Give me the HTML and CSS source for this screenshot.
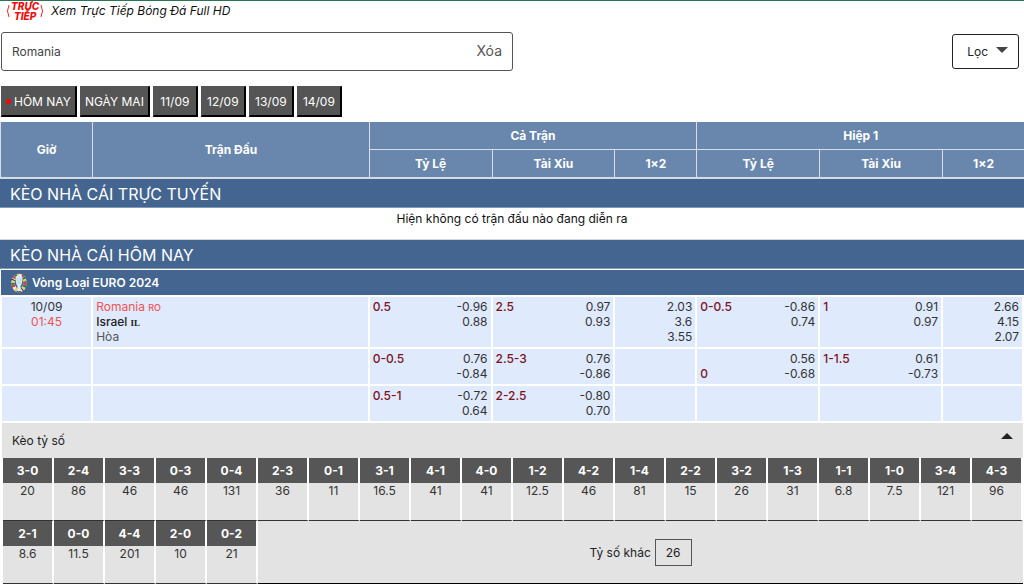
FILE: index.html
```
<!DOCTYPE html>
<html lang="vi">
<head>
<meta charset="utf-8">
<meta name="viewport" content="width=device-width, initial-scale=1">
<title>Kèo nhà cái</title>
<link rel="stylesheet" href="styles.css">
</head>
<body>
<header class="live">
  <a class="live-link" href="#live">
    <span class="live-logo"><svg class="paren" viewBox="0 0 4 16" aria-hidden="true"><path d="M3 2Q0 8 3 14"/></svg><span class="live-word">TRỰC<br>TIẾP</span><svg class="paren" viewBox="0 0 4 16" aria-hidden="true"><path d="M1 2Q4 8 1 14"/></svg></span>
    <span>Xem Trực Tiếp Bóng Đá Full HD</span>
  </a>
</header>
<form class="toolbar">
  <div class="search">
    <input class="search-input" type="text" value="Romania" aria-label="Tìm trận đấu">
    <button class="search-clear" type="reset">Xóa</button>
  </div>
  <button class="filter" type="button">Lọc <span class="arrow arrow-down"></span></button>
</form>
<nav class="days">
  <button class="day" type="button"><span class="dot"></span>HÔM NAY</button>
  <button class="day" type="button">NGÀY MAI</button>
  <button class="day" type="button">11/09</button>
  <button class="day" type="button">12/09</button>
  <button class="day" type="button">13/09</button>
  <button class="day" type="button">14/09</button>
</nav>
<main>
<table class="odds">
  <colgroup><col class="c-time"><col class="c-match"><col class="c-line"><col class="c-line"><col class="c-win"><col class="c-line"><col class="c-line"><col class="c-win"></colgroup>
  <thead>
    <tr><th rowspan="2">Giờ</th><th rowspan="2">Trận Đấu</th><th colspan="3">Cả Trận</th><th colspan="3">Hiệp 1</th></tr>
    <tr><th>Tỷ Lệ</th><th>Tài Xỉu</th><th>1×2</th><th>Tỷ Lệ</th><th>Tài Xỉu</th><th>1×2</th></tr>
  </thead>
  <tbody>
    <tr><th class="band" colspan="8">KÈO NHÀ CÁI TRỰC TUYẾN</th></tr>
    <tr><td class="empty" colspan="8">Hiện không có trận đấu nào đang diễn ra</td></tr>
    <tr><th class="band" colspan="8">KÈO NHÀ CÁI HÔM NAY</th></tr>
    <tr><th class="league" colspan="8"><span class="league-name">
      <svg class="league-icon" viewBox="0 0 16 20" aria-hidden="true">
        <g fill="none" stroke-width="3.500">
          <ellipse cx="8" cy="10" rx="6" ry="7.500" stroke="#eef1f0"/>
          <ellipse cx="8" cy="10" rx="6" ry="7.500" stroke="#d93434" stroke-dasharray="2 6.500"/>
          <ellipse cx="8" cy="10" rx="6" ry="7.500" stroke="#1d7a4a" stroke-dasharray="2 6.500" stroke-dashoffset="-2.200"/>
          <ellipse cx="8" cy="10" rx="6" ry="7.500" stroke="#f0c62d" stroke-dasharray="1.600 6.900" stroke-dashoffset="-4.400"/>
          <ellipse cx="8" cy="10" rx="6" ry="7.500" stroke="#202a3a" stroke-dasharray="1 16" stroke-dashoffset="-6.500"/>
        </g>
        <path d="M4.500 4Q8 0 11.500 4L11 10Q10.500 12 9.500 13L10 18H6L6.500 13Q5.500 12 5 10Z" fill="#dceaf6"/>
        <path d="M6.500 5L7 11M9.500 5L9 11" stroke="#b4d0e6" fill="none"/>
      </svg>Vòng Loại EURO 2024</span></th></tr>
    <tr class="match">
      <td class="time">10/09<br><span class="hot">01:45</span></td>
      <td class="teams"><span class="hot">Romania <small>RO</small></span><br><span class="away">Israel <small class="serif">IL</small></span><br>Hòa</td>
      <td><div class="pair"><span class="line">0.5</span><span>-0.96<br>0.88</span></div></td>
      <td><div class="pair"><span class="line">2.5</span><span>0.97<br>0.93</span></div></td>
      <td class="win">2.03<br>3.6<br>3.55</td>
      <td><div class="pair"><span class="line">0-0.5</span><span>-0.86<br>0.74</span></div></td>
      <td><div class="pair"><span class="line">1</span><span>0.91<br>0.97</span></div></td>
      <td class="win">2.66<br>4.15<br>2.07</td>
    </tr>
    <tr class="match">
      <td></td><td></td>
      <td><div class="pair"><span class="line">0-0.5</span><span>0.76<br>-0.84</span></div></td>
      <td><div class="pair"><span class="line">2.5-3</span><span>0.76<br>-0.86</span></div></td>
      <td></td>
      <td><div class="pair"><span class="line"><br>0</span><span>0.56<br>-0.68</span></div></td>
      <td><div class="pair"><span class="line">1-1.5</span><span>0.61<br>-0.73</span></div></td>
      <td></td>
    </tr>
    <tr class="match">
      <td></td><td></td>
      <td><div class="pair"><span class="line">0.5-1</span><span>-0.72<br>0.64</span></div></td>
      <td><div class="pair"><span class="line">2-2.5</span><span>-0.80<br>0.70</span></div></td>
      <td></td><td></td><td></td><td></td>
    </tr>
  </tbody>
</table>
<section class="scores">
  <button class="scores-head" type="button"><span>Kèo tỷ số</span><span class="arrow arrow-up"></span></button>
  <div class="score-grid">
    <dl class="score"><dt>3-0</dt><dd>20</dd></dl>
    <dl class="score"><dt>2-4</dt><dd>86</dd></dl>
    <dl class="score"><dt>3-3</dt><dd>46</dd></dl>
    <dl class="score"><dt>0-3</dt><dd>46</dd></dl>
    <dl class="score"><dt>0-4</dt><dd>131</dd></dl>
    <dl class="score"><dt>2-3</dt><dd>36</dd></dl>
    <dl class="score"><dt>0-1</dt><dd>11</dd></dl>
    <dl class="score"><dt>3-1</dt><dd>16.5</dd></dl>
    <dl class="score"><dt>4-1</dt><dd>41</dd></dl>
    <dl class="score"><dt>4-0</dt><dd>41</dd></dl>
    <dl class="score"><dt>1-2</dt><dd>12.5</dd></dl>
    <dl class="score"><dt>4-2</dt><dd>46</dd></dl>
    <dl class="score"><dt>1-4</dt><dd>81</dd></dl>
    <dl class="score"><dt>2-2</dt><dd>15</dd></dl>
    <dl class="score"><dt>3-2</dt><dd>26</dd></dl>
    <dl class="score"><dt>1-3</dt><dd>31</dd></dl>
    <dl class="score"><dt>1-1</dt><dd>6.8</dd></dl>
    <dl class="score"><dt>1-0</dt><dd>7.5</dd></dl>
    <dl class="score"><dt>3-4</dt><dd>121</dd></dl>
    <dl class="score"><dt>4-3</dt><dd>96</dd></dl>
    <dl class="score"><dt>2-1</dt><dd>8.6</dd></dl>
    <dl class="score"><dt>0-0</dt><dd>11.5</dd></dl>
    <dl class="score"><dt>4-4</dt><dd>201</dd></dl>
    <dl class="score"><dt>2-0</dt><dd>10</dd></dl>
    <dl class="score"><dt>0-2</dt><dd>21</dd></dl>
    <div class="other"><span>Tỷ số khác</span><span class="other-value">26</span></div>
  </div>
</section>
</main>
</body>
</html>
```
FILE: styles.css
```
* { box-sizing: border-box; }
body {
  margin: 0;
  border-top: 1px solid #2b7358;
  background: #fff;
  color: #333;
  font: 12px/15px Inter, sans-serif;
}
button, input { font: inherit; color: inherit; }

.live { height: 21px; }
.live-link {
  display: inline-flex;
  align-items: center;
  gap: 7px;
  padding-left: 6px;
  color: #111;
  font-style: italic;
  line-height: 20px;
  text-decoration: none;
}
.live-logo { display: flex; align-items: center; gap: 1px; color: #f00b0b; }
.live-word {
  font-size: 10px;
  line-height: 10px;
  font-weight: 800;
  text-align: center;
}
.paren { width: 4px; height: 16px; fill: none; stroke: #f22; stroke-width: 1; }

.toolbar {
  display: flex;
  align-items: center;
  justify-content: space-between;
  padding: 10px 5px 0 1px;
}
.search {
  display: flex;
  width: 50vw;
  height: 39px;
  border: 1px solid #555;
  border-radius: 3px;
}
.search-input {
  flex: 1;
  min-width: 0;
  padding: 0 10px;
  border: 0;
  outline: 0;
  background: none;
  color: #444;
}
.search-clear {
  padding: 0 10px 2px;
  border: 0;
  background: none;
  color: #555;
  font-size: 14px;
}
.filter {
  display: flex;
  align-items: center;
  gap: 8px;
  height: 35px;
  padding: 0 10px 0 14px;
  border: 1px solid #222;
  border-radius: 3px;
  background: #fff;
  color: #222;
}
.arrow { border: 6px solid transparent; }
.arrow-down { border-top-color: #444; border-bottom: 0; margin-bottom: 4px; }
.arrow-up { border-bottom-color: #222; border-top: 0; margin-bottom: 9px; }

.days { display: flex; gap: 3px; padding: 15px 1px 5px; }
.day {
  display: flex;
  align-items: center;
  justify-content: center;
  min-width: 45px;
  height: 31px;
  padding: 0 4px;
  border: 1px solid #555;
  border-right: 2px solid #000;
  border-bottom: 2px solid #000;
  background: #555;
  color: #fff;
}
.dot { width: 5px; height: 5px; margin-right: 3px; border-radius: 50%; background: #f00; }

.odds { width: 100%; table-layout: fixed; border-collapse: separate; border-spacing: 0; }
.c-time { width: 9%; }
.c-match { width: 27%; }
.c-line { width: 12%; }
.c-win { width: 8%; }
.odds th, .odds td { padding: 0; }
.odds thead th {
  height: 28px;
  border-left: 1px solid #d5deea;
  border-bottom: 1px solid #d5deea;
  background: #6987ad;
  color: #fff;
  font-weight: 700;
}
.odds .band {
  height: 30px;
  padding: 1px 0 0 10px;
  border-top: 1px solid #d5d9d5;
  border-bottom: 1px solid #7d9bbb;
  background: #44658f;
  color: #fff;
  font-size: 16px;
  line-height: 20px;
  font-weight: 400;
  text-align: left;
}
.odds .empty { height: 31px; padding-top: 3px; color: #111; text-align: center; vertical-align: top; }
.odds .league {
  height: 27px;
  padding-left: 10px;
  border: solid #fff;
  border-width: 1px 0 1px 1px;
  background: #44658f;
  color: #fff;
  font-weight: 600;
  text-align: left;
}
.league-name { display: flex; align-items: center; gap: 5px; }
.league-icon { width: 16px; height: 20px; }
.odds .match td {
  height: 37px;
  padding: 2px 3px 3px;
  border: 1px solid #fff;
  background: #dfeafd;
  vertical-align: top;
}
.odds .match td:first-child { border-left-width: 2px; }
.odds .match td:last-child { border-right-width: 2px; }
.time { text-align: center; }
.hot { color: #f05353; }
.teams { color: #555; }
.away { color: #222; font-weight: 500; }
small { font-size: 9px; line-height: 1; font-weight: 500; }
.serif { font-family: "Liberation Serif", serif; font-weight: 700; }
.pair { display: flex; justify-content: space-between; text-align: right; }
.line { color: #7c101b; font-weight: 500; text-align: left; }
.odds .win { text-align: right; }

.scores { margin: 1px 1px 0 2px; background: #e3e3e3; }
.scores-head {
  display: flex;
  align-items: center;
  justify-content: space-between;
  width: 100%;
  height: 35px;
  padding: 0 10px;
  border: 0;
  background: none;
  color: #222;
}
.score-grid {
  display: grid;
  grid-template-columns: repeat(20, 1fr);
  border-left: 1px solid #fff;
}
.score {
  height: 63px;
  margin: 0;
  border-right: 2px solid #fff;
  border-bottom: 1px solid #333;
  text-align: center;
}
.score dt {
  padding: 5px 0;
  background: #565656;
  color: #fff;
  font-weight: 700;
}
.score dd { margin: 0; }
.other {
  grid-column: span 15;
  display: flex;
  align-items: center;
  justify-content: center;
  gap: 4px;
  border-bottom: 1px solid #000;
  color: #222;
}
.other-value { padding: 5px 10px; border: 1px solid #555; }
```
